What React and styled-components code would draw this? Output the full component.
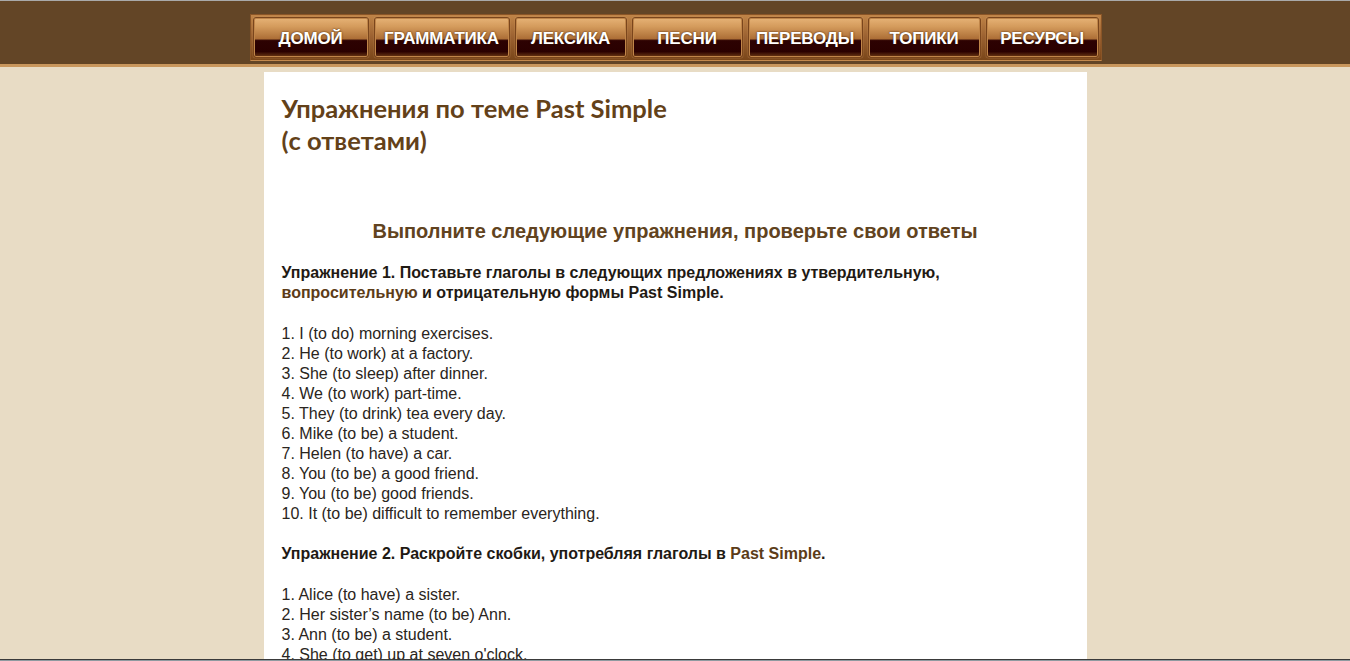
import React from 'react';
import styled, {createGlobalStyle} from 'styled-components';

const GlobalStyle = createGlobalStyle`
  html, body {
    margin: 0;
    padding: 0;
    background: #e8dcc5;
  }
  body {
    font-family: "Liberation Sans", Arial, sans-serif;
    overflow: hidden;
  }
`;

const menu = [
  {label: 'ДОМОЙ', w: 116},
  {label: 'ГРАММАТИКА', w: 136},
  {label: 'ЛЕКСИКА', w: 112},
  {label: 'ПЕСНИ', w: 111},
  {label: 'ПЕРЕВОДЫ', w: 115},
  {label: 'ТОПИКИ', w: 113},
  {label: 'РЕСУРСЫ', w: 113},
];

const first = [
  'I (to do) morning exercises.',
  'He (to work) at a factory.',
  'She (to sleep) after dinner.',
  'We (to work) part-time.',
  'They (to drink) tea every day.',
  'Mike (to be) a student.',
  'Helen (to have) a car.',
  'You (to be) a good friend.',
  'You (to be) good friends.',
  'It (to be) difficult to remember everything.',
];

const second = [
  'Alice (to have) a sister.',
  'Her sister’s name (to be) Ann.',
  'Ann (to be) a student.',
  "She (to get) up at seven o'clock.",
];

const App = () => {
  return (
    <>
      <GlobalStyle />
      <Header>
        <Nav>
          {menu.map((m) => (
            <NavButton key={m.label} $w={m.w}>{m.label}</NavButton>
          ))}
        </Nav>
      </Header>
      <Page>
        <Title>Упражнения по теме Past Simple<br />(с ответами)</Title>
        <Lead>Выполните следующие упражнения, проверьте свои ответы</Lead>
        <Task>
          Упражнение 1. Поставьте глаголы в следующих предложениях в утвердительную,<br />
          <Accent>вопросительную</Accent> и отрицательную формы Past Simple.
        </Task>
        <List>
          {first.map((s, i) => (
            <li key={i}>{i + 1}. {s}</li>
          ))}
        </List>
        <Task>
          Упражнение 2. Раскройте скобки, употребляя глаголы в <Accent>Past Simple</Accent>.
        </Task>
        <List>
          {second.map((s, i) => (
            <li key={i}>{i + 1}. {s}</li>
          ))}
        </List>
      </Page>
      <BottomEdge />
    </>
  );
};

const Header = styled.header`
  height: 63px;
  border-top: 1px solid #a9a9a9;
  border-bottom: 3px solid #c9975d;
  background: #634526;
  display: flex;
  justify-content: center;
  align-items: flex-start;
`;

const Nav = styled.nav`
  margin-top: 13px;
  margin-left: 1px;
  height: 47px;
  box-sizing: border-box;
  padding: 2px 2px;
  display: flex;
  gap: 5px;
  background: linear-gradient(#c08447, #9a6030 50%, #7a4619);
  border: 1px solid #8a5527;
  border-bottom-color: #c48a4e;
`;

const NavButton = styled.a`
  width: ${(p) => p.$w}px;
  box-sizing: border-box;
  height: 100%;
  display: flex;
  align-items: center;
  justify-content: center;
  padding-top: 2px;
  border: 1px solid #7a451c;
  border-radius: 3px;
  box-shadow: inset 0 0 0 1px #c08549, 0 0 1px #e3b27a;
  background: linear-gradient(
    #e6b276 0%,
    #d49b5c 22%,
    #ad6f37 53%,
    #2d0202 58%,
    #2a0000 86%,
    #6e3a14 100%
  );
  color: #fff;
  font-weight: bold;
  font-size: 17px;
  letter-spacing: -0.2px;
  text-shadow: 0 0 2px #3a1a00;
  cursor: pointer;
`;

const Page = styled.main`
  width: 823px;
  margin: 5px auto 0;
  background: #fff;
  box-sizing: border-box;
  padding: 20px 18px 40px;
  color: #2c2c2c;
`;

const Title = styled.h1`
  margin: 0;
  font-family: Lato, "Open Sans", sans-serif;
  font-weight: bold;
  font-size: 25.5px;
  line-height: 32px;
  color: #634119;
`;

const Lead = styled.h2`
  margin: 63px 0 0;
  text-align: center;
  font-size: 20px;
  line-height: 24px;
  font-weight: bold;
  color: #614320;
`;

const Task = styled.p`
  margin: 20px 0 0;
  font-size: 16px;
  line-height: 20px;
  font-weight: bold;
  color: #1f1a14;
`;

const Accent = styled.span`
  color: #5c3c18;
`;

const List = styled.ul`
  list-style: none;
  margin: 21px 0 0;
  padding: 0;
  font-size: 16px;
  line-height: 20px;
  color: #2a2520;
`;

const BottomEdge = styled.div`
  position: fixed;
  left: 0;
  right: 0;
  bottom: 0;
  height: 2px;
  border-top: 1px solid #3a3a3a;
  background: #8f9aa0;
  box-sizing: border-box;
`;

export default App;
